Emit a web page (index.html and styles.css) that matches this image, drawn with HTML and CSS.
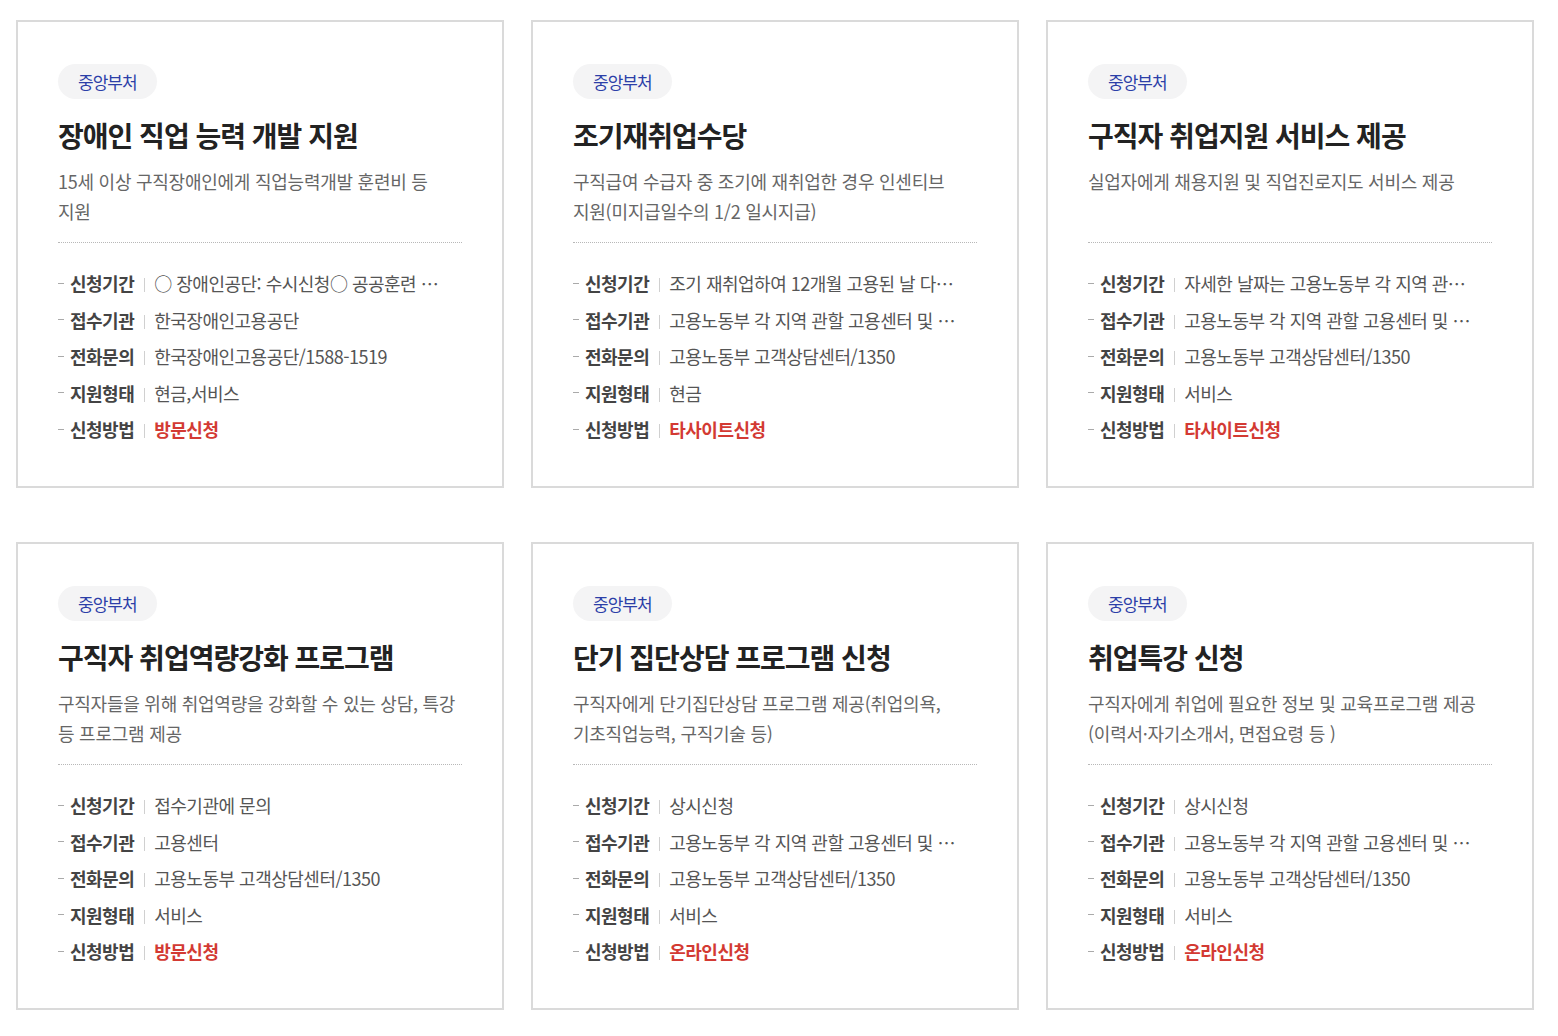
FILE: index.html
```html
<!DOCTYPE html>
<html lang="ko">
<head>
<meta charset="utf-8">
<title>지원 서비스</title>
<link rel="stylesheet" href="styles.css">
</head>
<body>
<div class="grid">
  <div class="card">
    <span class="badge">중앙부처</span>
    <h2 class="title">장애인 직업 능력 개발 지원</h2>
    <p class="desc">15세 이상 구직장애인에게 직업능력개발 훈련비 등 지원</p>
    <ul class="info">
      <li><span class="label">신청기간</span><span class="value">○ 장애인공단: 수시신청○ 공공훈련 …</span></li>
      <li><span class="label">접수기관</span><span class="value">한국장애인고용공단</span></li>
      <li><span class="label">전화문의</span><span class="value">한국장애인고용공단/1588-1519</span></li>
      <li><span class="label">지원형태</span><span class="value">현금,서비스</span></li>
      <li><span class="label">신청방법</span><span class="value red">방문신청</span></li>
    </ul>
  </div>
  <div class="card">
    <span class="badge">중앙부처</span>
    <h2 class="title">조기재취업수당</h2>
    <p class="desc">구직급여 수급자 중 조기에 재취업한 경우 인센티브 지원(미지급일수의 1/2 일시지급)</p>
    <ul class="info">
      <li><span class="label">신청기간</span><span class="value">조기 재취업하여 12개월 고용된 날 다…</span></li>
      <li><span class="label">접수기관</span><span class="value">고용노동부 각 지역 관할 고용센터 및 …</span></li>
      <li><span class="label">전화문의</span><span class="value">고용노동부 고객상담센터/1350</span></li>
      <li><span class="label">지원형태</span><span class="value">현금</span></li>
      <li><span class="label">신청방법</span><span class="value red">타사이트신청</span></li>
    </ul>
  </div>
  <div class="card">
    <span class="badge">중앙부처</span>
    <h2 class="title">구직자 취업지원 서비스 제공</h2>
    <p class="desc">실업자에게 채용지원 및 직업진로지도 서비스 제공</p>
    <ul class="info">
      <li><span class="label">신청기간</span><span class="value">자세한 날짜는 고용노동부 각 지역 관…</span></li>
      <li><span class="label">접수기관</span><span class="value">고용노동부 각 지역 관할 고용센터 및 …</span></li>
      <li><span class="label">전화문의</span><span class="value">고용노동부 고객상담센터/1350</span></li>
      <li><span class="label">지원형태</span><span class="value">서비스</span></li>
      <li><span class="label">신청방법</span><span class="value red">타사이트신청</span></li>
    </ul>
  </div>
  <div class="card">
    <span class="badge">중앙부처</span>
    <h2 class="title">구직자 취업역량강화 프로그램</h2>
    <p class="desc">구직자들을 위해 취업역량을 강화할 수 있는 상담, 특강 등 프로그램 제공</p>
    <ul class="info">
      <li><span class="label">신청기간</span><span class="value">접수기관에 문의</span></li>
      <li><span class="label">접수기관</span><span class="value">고용센터</span></li>
      <li><span class="label">전화문의</span><span class="value">고용노동부 고객상담센터/1350</span></li>
      <li><span class="label">지원형태</span><span class="value">서비스</span></li>
      <li><span class="label">신청방법</span><span class="value red">방문신청</span></li>
    </ul>
  </div>
  <div class="card">
    <span class="badge">중앙부처</span>
    <h2 class="title">단기 집단상담 프로그램 신청</h2>
    <p class="desc">구직자에게 단기집단상담 프로그램 제공(취업의욕, 기초직업능력, 구직기술 등)</p>
    <ul class="info">
      <li><span class="label">신청기간</span><span class="value">상시신청</span></li>
      <li><span class="label">접수기관</span><span class="value">고용노동부 각 지역 관할 고용센터 및 …</span></li>
      <li><span class="label">전화문의</span><span class="value">고용노동부 고객상담센터/1350</span></li>
      <li><span class="label">지원형태</span><span class="value">서비스</span></li>
      <li><span class="label">신청방법</span><span class="value red">온라인신청</span></li>
    </ul>
  </div>
  <div class="card">
    <span class="badge">중앙부처</span>
    <h2 class="title">취업특강 신청</h2>
    <p class="desc">구직자에게 취업에 필요한 정보 및 교육프로그램 제공 (이력서·자기소개서, 면접요령 등 )</p>
    <ul class="info">
      <li><span class="label">신청기간</span><span class="value">상시신청</span></li>
      <li><span class="label">접수기관</span><span class="value">고용노동부 각 지역 관할 고용센터 및 …</span></li>
      <li><span class="label">전화문의</span><span class="value">고용노동부 고객상담센터/1350</span></li>
      <li><span class="label">지원형태</span><span class="value">서비스</span></li>
      <li><span class="label">신청방법</span><span class="value red">온라인신청</span></li>
    </ul>
  </div>
</div>
</body>
</html>
```
FILE: styles.css
```css
* { box-sizing: border-box; }
html, body { margin: 0; background: #fff; }
body {
  padding: 20px 24px 0 16px;
  font-family: "Noto Sans CJK KR", "Noto Sans", sans-serif;
  color: #555;
}
.grid {
  display: grid;
  grid-template-columns: repeat(3, 488px);
  column-gap: 27px;
  row-gap: 54px;
}
.card {
  border: 2px solid #dadada;
  padding: 42px 40px 37px;
  height: 468px;
}
.badge {
  display: inline-block;
  height: 35px;
  line-height: 35px;
  padding: 0 20px;
  border-radius: 18px;
  background: #f4f4f5;
  color: #2c3fa8;
  font-size: 17px;
  letter-spacing: -1px;
}
.title {
  margin: 16px 0 0;
  font-size: 28px;
  line-height: 40px;
  font-weight: 700;
  color: #222;
  letter-spacing: -1px;
}
.desc {
  box-sizing: content-box;
  margin: 11px 0 0;
  min-height: 60px;
  padding-bottom: 16px;
  border-bottom: 1px dotted #b8b8b8;
  font-size: 18px;
  line-height: 30px;
  color: #666;
  letter-spacing: -0.25px;
  word-break: keep-all;
}
.info {
  list-style: none;
  margin: 0;
  padding: 22px 0 0;
}
.info li {
  display: flex;
  align-items: center;
  height: 36.5px;
  font-size: 18px;
  letter-spacing: -0.5px;
  white-space: nowrap;
}
.info li::before {
  content: "";
  width: 6px;
  height: 1px;
  background: #aaa;
  margin-right: 6px;
}
.label {
  font-weight: 700;
  color: #444;
}
.label::after {
  content: "";
  display: inline-block;
  width: 1px;
  height: 14px;
  background: #d0d0d0;
  margin: 0 9px 0 10px;
  vertical-align: -1px;
}
.value { color: #555; }
.value.red { color: #d33a33; font-weight: 700; }
```
